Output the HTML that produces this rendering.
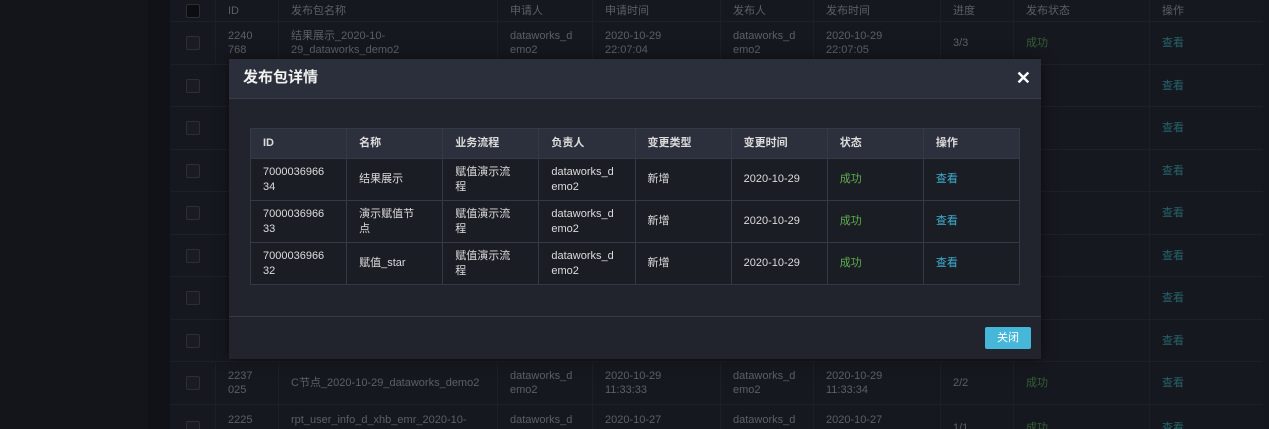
<!DOCTYPE html>
<html><head><meta charset="utf-8"><style>
*{margin:0;padding:0;box-sizing:border-box}
html,body{width:1269px;height:429px;overflow:hidden}
body{background:#15171e;font-family:"Liberation Sans","Noto Sans CJK SC",sans-serif;position:relative}
.side{position:absolute;left:0;top:0;width:148px;height:429px;background:#13151b}
.gap{position:absolute;left:148px;top:0;width:22px;height:429px;background:#101217}
.bg{position:absolute;left:170px;top:0;width:1093px;height:429px;background:#16181f;overflow:hidden}
.bg .r{position:absolute;left:0;width:1093px;border-bottom:1px solid #1d2027;font-size:11px;color:#5c5f67;line-height:14px}
.bg .c{position:absolute;top:0;height:100%;border-left:1px solid #1c1f26;display:flex;align-items:center;padding-left:12px}
.cb{width:14px;height:14px;border:1px solid #2c2f36;border-radius:2px;background:#1a1c22}
.g{color:#355e33}.b{color:#27636b}
.modal{position:absolute;left:229px;top:59px;width:812px;height:300px;background:#21242d;box-shadow:0 0 12px rgba(0,0,0,.5)}
.mh{height:40px;background:#2b2f3b;border-bottom:1px solid #3a3e4a;color:#f0f0f0;font-size:15px;font-weight:bold;padding-left:14px;line-height:38px;position:relative}
.x{position:absolute;right:10px;top:0;font-size:18px;color:#fff}
.t{position:absolute;left:21px;top:69px;width:770px;border-collapse:collapse;font-size:11px;color:#dcdcdc}
.t td,.t th{border:1px solid #353945;padding:0 12px;text-align:left;width:96px;line-height:15px}
.t th{height:30px;background:#2c303c;font-weight:bold}
.t td{height:42px;background:#1b1d25}
.ok{color:#5dae4c}.lk{color:#3fb0d0}
.ft{position:absolute;left:0;top:257px;width:812px;border-top:1px solid #363a46}
.btn{position:absolute;left:756px;top:268px;width:46px;height:22px;background:#47b7d9;border-radius:2px;color:#fff;font-size:11px;text-align:center;line-height:22px}
</style></head><body>
<div class="side"></div><div class="gap"></div>
<div class="bg">
<div class="r" style="top:0;height:22px"><div class="c" style="left:0;border:0;padding-left:16px"><div class="cb" style="background:#0c0d10"></div></div><div class="c" style="left:45px">ID</div><div class="c" style="left:108px">发布包名称</div><div class="c" style="left:327px">申请人</div><div class="c" style="left:422px">申请时间</div><div class="c" style="left:550px">发布人</div><div class="c" style="left:643px">发布时间</div><div class="c" style="left:770px">进度</div><div class="c" style="left:843px">发布状态</div><div class="c" style="left:979px">操作</div></div>
<div class="r" style="top:22px;height:43px"><div class="c" style="left:0;border:0;padding-left:16px"><div class="cb"></div></div><div class="c" style="left:45px">2240<br>768</div><div class="c" style="left:108px">结果展示_2020-10-<br>29_dataworks_demo2</div><div class="c" style="left:327px">dataworks_d<br>emo2</div><div class="c" style="left:422px">2020-10-29<br>22:07:04</div><div class="c" style="left:550px">dataworks_d<br>emo2</div><div class="c" style="left:643px">2020-10-29<br>22:07:05</div><div class="c" style="left:770px">3/3</div><div class="c g" style="left:843px">成功</div><div class="c b" style="left:979px">查看</div></div>
<div class="r" style="top:65px;height:42px"><div class="c" style="left:0;border:0;padding-left:16px"><div class="cb"></div></div><div class="c b" style="left:979px">查看</div></div>
<div class="r" style="top:107px;height:43px"><div class="c" style="left:0;border:0;padding-left:16px"><div class="cb"></div></div><div class="c b" style="left:979px">查看</div></div>
<div class="r" style="top:150px;height:42px"><div class="c" style="left:0;border:0;padding-left:16px"><div class="cb"></div></div><div class="c b" style="left:979px">查看</div></div>
<div class="r" style="top:192px;height:43px"><div class="c" style="left:0;border:0;padding-left:16px"><div class="cb"></div></div><div class="c b" style="left:979px">查看</div></div>
<div class="r" style="top:235px;height:42px"><div class="c" style="left:0;border:0;padding-left:16px"><div class="cb"></div></div><div class="c b" style="left:979px">查看</div></div>
<div class="r" style="top:277px;height:43px"><div class="c" style="left:0;border:0;padding-left:16px"><div class="cb"></div></div><div class="c b" style="left:979px">查看</div></div>
<div class="r" style="top:320px;height:42px"><div class="c" style="left:0;border:0;padding-left:16px"><div class="cb"></div></div><div class="c b" style="left:979px">查看</div></div>
<div class="r" style="top:362px;height:43px"><div class="c" style="left:0;border:0;padding-left:16px"><div class="cb"></div></div><div class="c" style="left:45px">2237<br>025</div><div class="c" style="left:108px">C节点_2020-10-29_dataworks_demo2</div><div class="c" style="left:327px">dataworks_d<br>emo2</div><div class="c" style="left:422px">2020-10-29<br>11:33:33</div><div class="c" style="left:550px">dataworks_d<br>emo2</div><div class="c" style="left:643px">2020-10-29<br>11:33:34</div><div class="c" style="left:770px">2/2</div><div class="c g" style="left:843px">成功</div><div class="c b" style="left:979px">查看</div></div>
<div class="r" style="top:405px;height:24px;border:0"><div class="c" style="left:0;border:0;padding-left:16px;align-items:flex-end"><div class="cb" style="margin-bottom:-6px"></div></div><div class="c" style="left:45px;align-items:flex-start;padding-top:8px">2225</div><div class="c" style="left:108px;align-items:flex-start;padding-top:8px">rpt_user_info_d_xhb_emr_2020-10-</div><div class="c" style="left:327px;align-items:flex-start;padding-top:8px">dataworks_d</div><div class="c" style="left:422px;align-items:flex-start;padding-top:8px">2020-10-27</div><div class="c" style="left:550px;align-items:flex-start;padding-top:8px">dataworks_d</div><div class="c" style="left:643px;align-items:flex-start;padding-top:8px">2020-10-27</div><div class="c" style="left:770px;align-items:flex-start;padding-top:16px">1/1</div><div class="c g" style="left:843px;align-items:flex-start;padding-top:16px">成功</div><div class="c b" style="left:979px;align-items:flex-start;padding-top:16px">查看</div></div>
</div>
<div class="modal">
<div class="mh">发布包详情<span class="x">✕</span></div>
<table class="t">
<tr><th>ID</th><th>名称</th><th>业务流程</th><th>负责人</th><th>变更类型</th><th>变更时间</th><th>状态</th><th>操作</th></tr>
<tr><td>7000036966<br>34</td><td>结果展示</td><td>赋值演示流<br>程</td><td>dataworks_d<br>emo2</td><td>新增</td><td>2020-10-29</td><td class="ok">成功</td><td class="lk">查看</td></tr>
<tr><td>7000036966<br>33</td><td>演示赋值节<br>点</td><td>赋值演示流<br>程</td><td>dataworks_d<br>emo2</td><td>新增</td><td>2020-10-29</td><td class="ok">成功</td><td class="lk">查看</td></tr>
<tr><td>7000036966<br>32</td><td>赋值_star</td><td>赋值演示流<br>程</td><td>dataworks_d<br>emo2</td><td>新增</td><td>2020-10-29</td><td class="ok">成功</td><td class="lk">查看</td></tr>
</table>
<div class="ft"></div>
<div class="btn">关闭</div>
</div>
</body></html>
